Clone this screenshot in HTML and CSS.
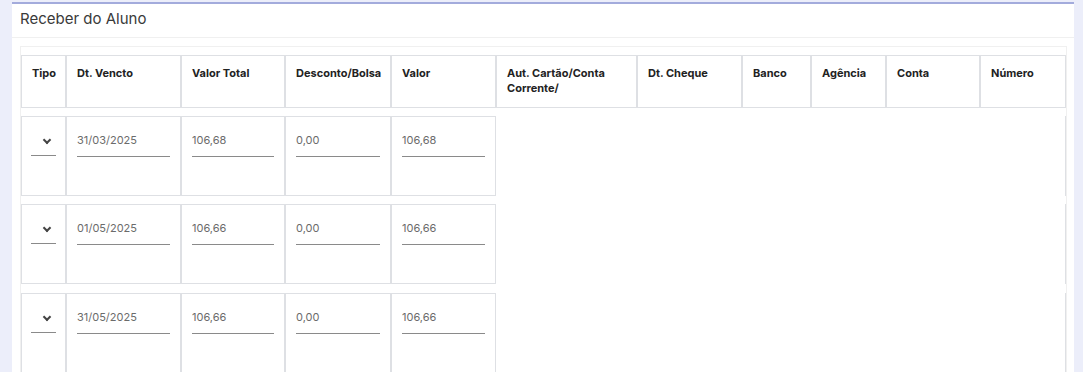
FILE: index.html
```html
<!DOCTYPE html>
<html lang="pt-BR">
<head>
    <meta charset="UTF-8">
    <meta name="viewport" content="width=device-width, initial-scale=1.0">
    <title>Receber do Aluno</title>
    <link rel="stylesheet" href="styles.css">
</head>
<body>
    <div class="card">
        <div class="card-header">Receber do Aluno</div>
        <div class="card-body">
            <div class="tabela">
                <div class="linha cabecalho">
                    <div class="cel">Tipo</div>
                    <div class="cel">Dt. Vencto</div>
                    <div class="cel">Valor Total</div>
                    <div class="cel">Desconto/Bolsa</div>
                    <div class="cel">Valor</div>
                    <div class="cel">Aut. Cartão/Conta Corrente/</div>
                    <div class="cel">Dt. Cheque</div>
                    <div class="cel">Banco</div>
                    <div class="cel">Agência</div>
                    <div class="cel">Conta</div>
                    <div class="cel">Número</div>
                </div>

                <div class="linha parcela">
                    <div class="cel"><div class="select"><span class="seta"></span></div></div>
                    <div class="cel"><input type="text" value="31/03/2025"></div>
                    <div class="cel"><input type="text" value="106,68"></div>
                    <div class="cel"><input type="text" value="0,00"></div>
                    <div class="cel"><input type="text" value="106,68"></div>
                    <div class="resto"></div>
                </div>

                <div class="linha parcela">
                    <div class="cel"><div class="select"><span class="seta"></span></div></div>
                    <div class="cel"><input type="text" value="01/05/2025"></div>
                    <div class="cel"><input type="text" value="106,66"></div>
                    <div class="cel"><input type="text" value="0,00"></div>
                    <div class="cel"><input type="text" value="106,66"></div>
                    <div class="resto"></div>
                </div>

                <div class="linha parcela">
                    <div class="cel"><div class="select"><span class="seta"></span></div></div>
                    <div class="cel"><input type="text" value="31/05/2025"></div>
                    <div class="cel"><input type="text" value="106,66"></div>
                    <div class="cel"><input type="text" value="0,00"></div>
                    <div class="cel"><input type="text" value="106,66"></div>
                    <div class="resto"></div>
                </div>
            </div>
        </div>
    </div>
</body>
</html>
```

FILE: styles.css
```css
body {
    font-family: Inter, "Noto Sans", sans-serif;
    margin: 0;
    padding: 0;
    background-color: #eceefa;
    height: 100vh;
    overflow: hidden;
}

.card {
    margin: 2px 9px 0 12px;
    background-color: #fff;
    border-top: 2px solid #a3abdc;
    height: 368px;
    overflow: hidden;
}

.card-header {
    padding: 4px 8px 7px 8px;
    line-height: 22px;
    font-size: 15px;
    color: #3a3a3a;
    border-bottom: 1px solid #f0f0f0;
}

.card-body {
    padding: 8px 7px 0 8px;
}

.tabela {
    border: 1px solid #f0f0f0;
    border-bottom: none;
    padding-top: 8px;
}

.linha {
    display: grid;
    grid-template-columns: 45px 115px 104px 106px 105px 141px 105px 69px 75px 94px 1fr;
}

.cel {
    border: 1px solid #dee0e4;
    padding: 10px;
    min-width: 0;
}

.cabecalho .cel {
    height: 53px;
    box-sizing: border-box;
    font-size: 11px;
    line-height: 15px;
    font-weight: 700;
    color: #222;
}

.parcela {
    margin-top: 8px;
    height: 80px;
}

.parcela:last-child {
    margin-top: 9px;
}

.resto {
    grid-column: 6 / 12;
    border-right: 1px solid #dee0e4;
}

input[type="text"] {
    display: block;
    width: 100%;
    box-sizing: border-box;
    height: 30px;
    padding: 0 0 4px 0;
    margin: 0;
    border: none;
    border-bottom: 1px solid #8a8a8a;
    font-family: inherit;
    font-size: 11px;
    color: #6b6b6b;
    background: transparent;
    outline: none;
}

.select {
    height: 28px;
    margin: 0 -1px;
    border-bottom: 1px solid #8a8a8a;
    position: relative;
}

.seta {
    position: absolute;
    left: 13px;
    top: 10px;
    width: 4px;
    height: 4px;
    border-right: 2px solid #444;
    border-bottom: 2px solid #444;
    transform: rotate(45deg);
}
```
